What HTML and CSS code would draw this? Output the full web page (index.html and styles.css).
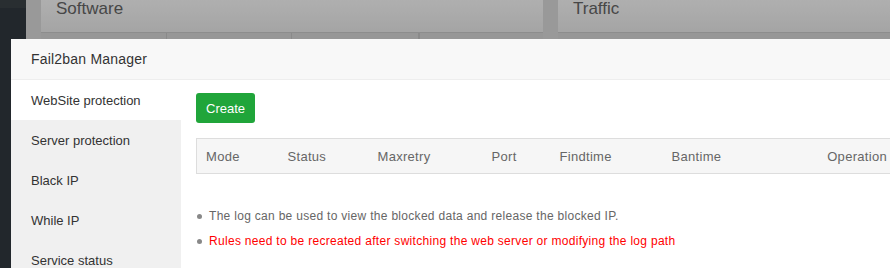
FILE: index.html
```html
<!DOCTYPE html>
<html lang="en">
<head>
    <meta charset="UTF-8" />
    <meta name="viewport" content="width=device-width, initial-scale=1.0" />
    <title>Fail2ban Manager</title>
    <link rel="stylesheet" href="styles.css">
</head>
<body>

    <div class="page">
        <div class="page-nav"></div>
        <div class="page-main">
            <div class="card card-soft">
                <div class="card-title">Software</div>
                <div class="card-row">
                    <span class="cell" style="width: 126px"></span>
                    <span class="cell" style="width: 125px"></span>
                    <span class="cell" style="width: 127px"></span>
                    <span class="cell"></span>
                </div>
            </div>
            <div class="card card-traffic">
                <div class="card-title">Traffic</div>
                <div class="card-row"></div>
            </div>
        </div>
    </div>

    <div class="mask"></div>

    <div class="layer">
        <div class="layer-title">Fail2ban Manager</div>
        <div class="layer-body">
            <ul class="tabs">
                <li class="active">WebSite protection</li>
                <li>Server protection</li>
                <li>Black IP</li>
                <li>While IP</li>
                <li>Service status</li>
            </ul>
            <div class="tab-content">
                <button class="btn-create">Create</button>
                <table class="rules">
                    <thead>
                        <tr>
                            <th class="c-mode">Mode</th>
                            <th class="c-status">Status</th>
                            <th class="c-max">Maxretry</th>
                            <th class="c-port">Port</th>
                            <th class="c-find">Findtime</th>
                            <th class="c-ban">Bantime</th>
                            <th class="c-op">Operation</th>
                        </tr>
                    </thead>
                    <tbody></tbody>
                </table>
                <ul class="help">
                    <li>The log can be used to view the blocked data and release the blocked IP.</li>
                    <li class="warn">Rules need to be recreated after switching the web server or modifying the log path</li>
                </ul>
            </div>
        </div>
    </div>

</body>
</html>
```

FILE: styles.css
```css
* {
    box-sizing: border-box;
}

body {
    margin: 0;
    width: 890px;
    height: 268px;
    overflow: hidden;
    position: relative;
    font-family: "Liberation Sans", Arial, sans-serif;
    background: #dcdcdc;
    color: #333;
}

/* page behind the dialog */
.page {
    display: flex;
    height: 268px;
}

.page-nav {
    width: 26px;
    background: linear-gradient(#3c4247 0, #3c4247 8px, #32393f 8px);
}

.page-main {
    flex: 1;
    display: flex;
    gap: 15px;
    padding-left: 15px;
}

.card {
    background: #fff;
}

.card-soft {
    width: 502px;
}

.card-traffic {
    flex: 1;
}

.card-title {
    height: 33px;
    padding-left: 15px;
    font-size: 17px;
    line-height: 17px;
    color: #666;
    background: linear-gradient(#fbfbfb, #ececec);
    border-bottom: 1px solid #cbcbcb;
}

.card-row {
    display: flex;
    height: 20px;
    background: #d8d8d8;
}

.card-row .cell {
    border-right: 1px solid #c6c6c6;
}

.mask {
    position: absolute;
    inset: 0;
    background: rgba(0, 0, 0, 0.3);
}

/* dialog */
.layer {
    position: absolute;
    left: 11px;
    top: 39px;
    width: 920px;
    height: 229px;
    overflow: hidden;
    background: #fff;
}

.layer-title {
    height: 41px;
    padding-left: 20px;
    line-height: 41px;
    font-size: 14px;
    letter-spacing: 0.2px;
    color: #333;
    background: #f8f8f8;
    border-bottom: 1px solid #eee;
}

.layer-body {
    display: flex;
}

.tabs {
    list-style: none;
    margin: 0;
    padding: 0;
    width: 170px;
    height: 188px;
    background: #f0f0f0;
}

.tabs li {
    height: 40px;
    line-height: 42px;
    padding-left: 20px;
    font-size: 13px;
    color: #333;
}

.tabs li.active {
    background: #fff;
}

.tab-content {
    flex: 1;
    padding: 13px 15px 0 15px;
}

.btn-create {
    display: block;
    height: 30px;
    padding: 0 10px;
    border: none;
    border-radius: 3px;
    background: #20a53a;
    color: #fff;
    font-family: inherit;
    font-size: 13px;
}

.rules {
    width: 701px;
    margin-top: 15px;
    border-collapse: collapse;
    font-size: 13px;
    letter-spacing: 0.3px;
}

.rules th {
    height: 35px;
    padding: 0 9px;
    font-weight: normal;
    color: #666;
    text-align: left;
    background: #f6f6f6;
    border-top: 1px solid #ddd;
    border-bottom: 1px solid #ddd;
}

.rules th:first-child {
    border-left: 1px solid #ddd;
}

.c-mode { width: 82px; }
.c-status { width: 90px; }
.c-max { width: 114px; }
.c-port { width: 68px; }
.c-find { width: 112px; }
.c-ban { width: 125px; }
.c-op { text-align: right !important; padding-right: 10px !important; }

.help {
    list-style: none;
    margin: 30px 0 0 0;
    padding: 0;
    font-size: 12px;
    line-height: 25px;
    letter-spacing: 0.3px;
    color: #666;
}

.help li {
    display: flex;
    align-items: center;
}

.help li::before {
    content: "";
    width: 5px;
    height: 5px;
    margin: 0 7px 0 1px;
    border-radius: 50%;
    background: #888;
}

.help li.warn {
    color: #f00;
}
```
